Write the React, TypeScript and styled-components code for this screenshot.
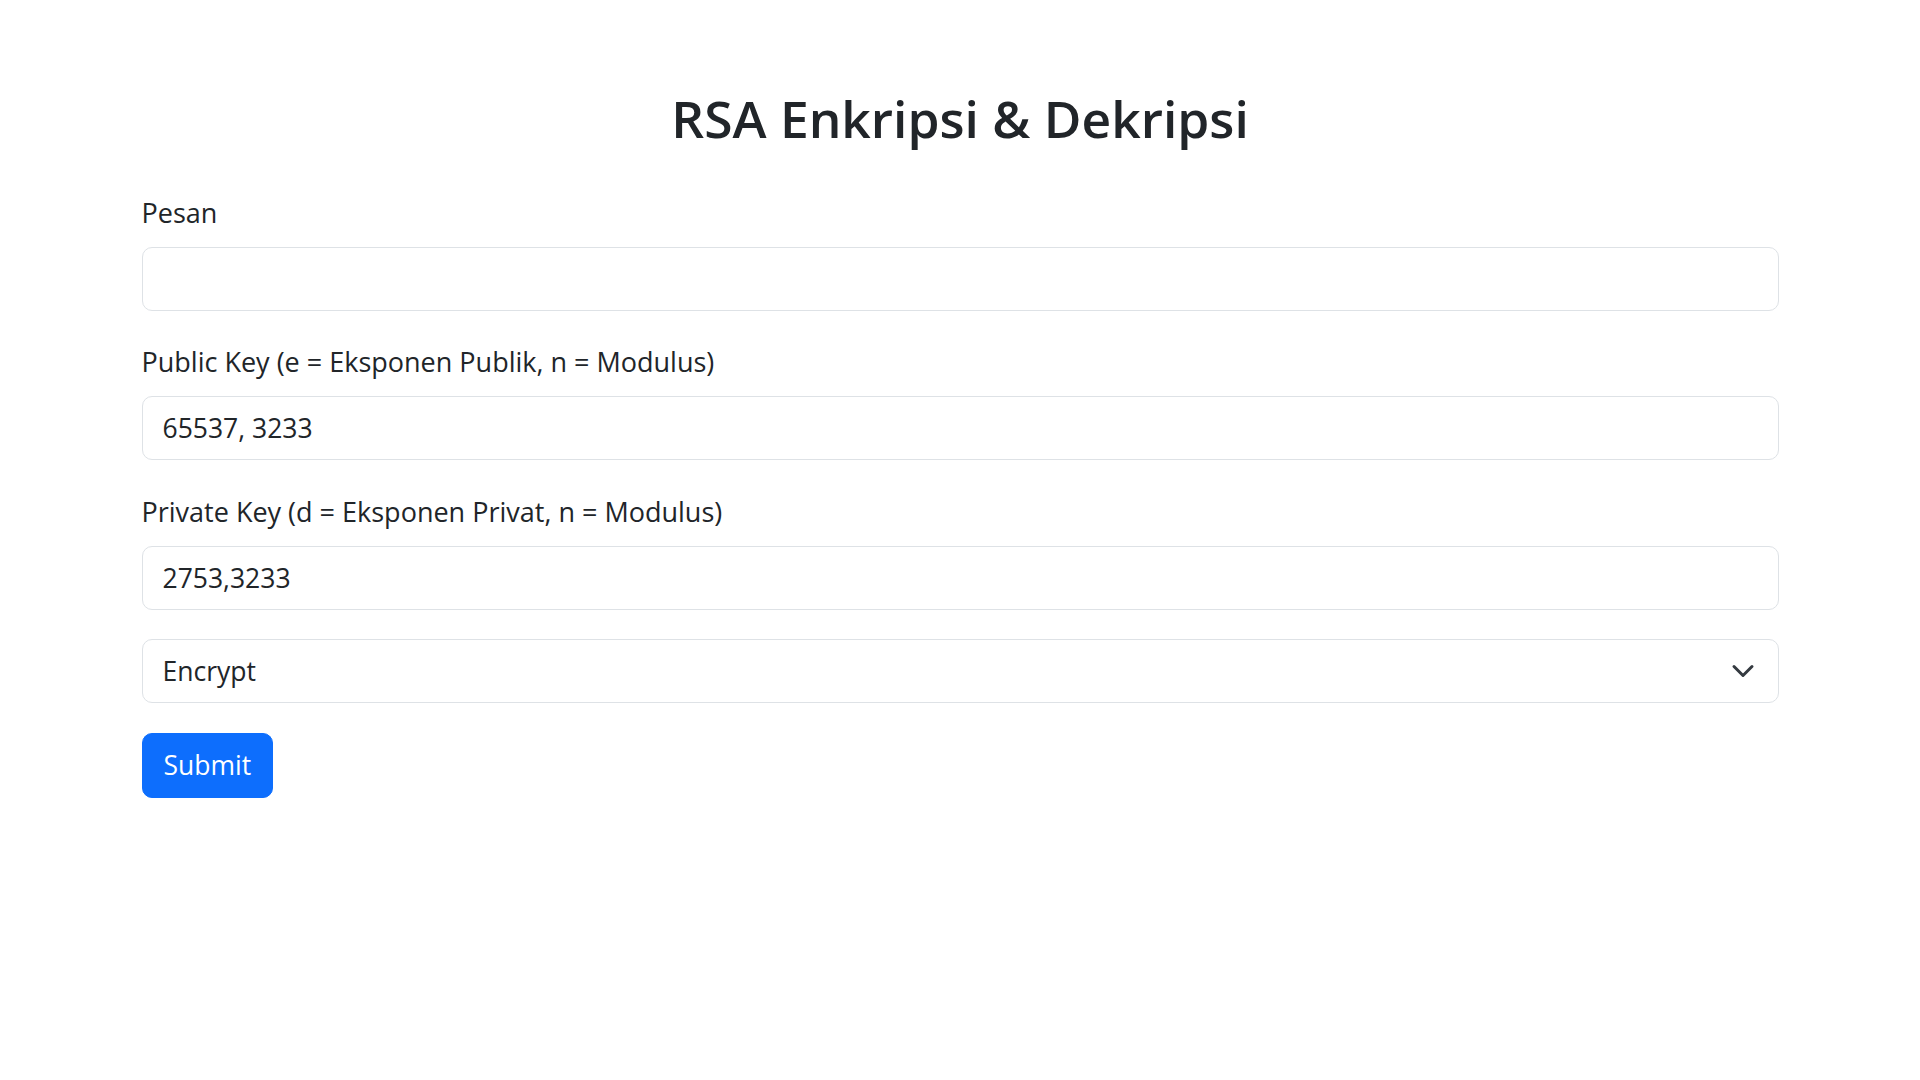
import React, { useState } from "react";
import styled, { createGlobalStyle } from "styled-components";

const GlobalStyle = createGlobalStyle`
  html, body {
    margin: 0;
    padding: 0;
    background: #ffffff;
  }
  body {
    font-family: "Open Sans", "Noto Sans", "Liberation Sans", sans-serif;
    color: #212529;
  }
  * {
    box-sizing: border-box;
  }
`;

const Page = styled.div`
  width: 1637px;
  margin: 0 auto;
  padding-top: 86px;
`;

const Title = styled.h1`
  margin: 0 0 39.5px;
  font-size: 51.5px;
  line-height: 65px;
  font-weight: 600;
  text-align: center;
  color: #212529;
`;

const Form = styled.form`
  display: flex;
  flex-direction: column;
`;

const Group = styled.div`
  margin-bottom: 29.5px;
`;

const Label = styled.label`
  display: block;
  font-size: 27px;
  line-height: 44px;
  margin-bottom: 12px;
  color: #212529;
`;

const Field = styled.input`
  display: block;
  width: 100%;
  height: 64px;
  padding: 0 20px;
  font-family: inherit;
  font-size: 26.5px;
  color: #212529;
  background: #ffffff;
  border: 1px solid #dee2e6;
  border-radius: 10px;
  outline: none;
`;

const SelectWrap = styled.div`
  position: relative;
  margin-bottom: 29.5px;
`;

const Select = styled.select`
  display: block;
  width: 100%;
  height: 64px;
  padding: 0 60px 0 20px;
  font-family: inherit;
  font-size: 26.5px;
  color: #212529;
  background: #ffffff;
  border: 1px solid #dee2e6;
  border-radius: 10px;
  appearance: none;
  outline: none;
`;

const Chevron = styled.svg`
  position: absolute;
  right: 24px;
  top: 50%;
  width: 24px;
  height: 24px;
  transform: translateY(-50%);
  pointer-events: none;
`;

const SubmitButton = styled.button`
  align-self: flex-start;
  height: 65px;
  padding: 0 21px;
  font-family: inherit;
  font-size: 26.5px;
  color: #ffffff;
  background: #0d6efd;
  border: 1px solid #0d6efd;
  border-radius: 10px;
  cursor: pointer;
`;

const App: React.FC = () => {
  const [message, setMessage] = useState("");
  const [publicKey, setPublicKey] = useState("65537, 3233");
  const [privateKey, setPrivateKey] = useState("2753,3233");
  const [mode, setMode] = useState("encrypt");

  return (
    <>
      <GlobalStyle />
      <Page>
        <Title>RSA Enkripsi &amp; Dekripsi</Title>
        <Form onSubmit={e => e.preventDefault()}>
          <Group>
            <Label htmlFor="pesan">Pesan</Label>
            <Field id="pesan" value={message} onChange={e => setMessage(e.target.value)} />
          </Group>
          <Group>
            <Label htmlFor="public">Public Key (e = Eksponen Publik, n = Modulus)</Label>
            <Field id="public" value={publicKey} onChange={e => setPublicKey(e.target.value)} />
          </Group>
          <Group>
            <Label htmlFor="private">Private Key (d = Eksponen Privat, n = Modulus)</Label>
            <Field id="private" value={privateKey} onChange={e => setPrivateKey(e.target.value)} />
          </Group>
          <SelectWrap>
            <Select value={mode} onChange={e => setMode(e.target.value)}>
              <option value="encrypt">Encrypt</option>
              <option value="decrypt">Decrypt</option>
            </Select>
            <Chevron viewBox="0 0 16 16" fill="none">
              <path d="m2 5 6 6 6-6" stroke="#343a40" strokeWidth="2" strokeLinecap="round" strokeLinejoin="round" />
            </Chevron>
          </SelectWrap>
          <SubmitButton type="submit">Submit</SubmitButton>
        </Form>
      </Page>
    </>
  );
};

export default App;
